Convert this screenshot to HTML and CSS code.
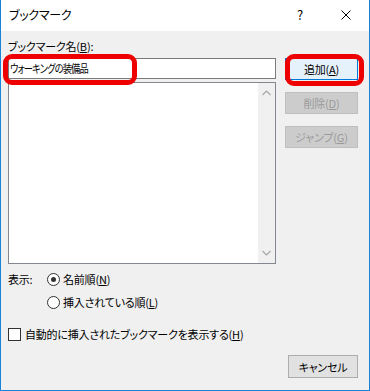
FILE: index.html
```html
<!DOCTYPE html>
<html lang="ja">
<head>
    <meta charset="UTF-8">
    <meta name="viewport" content="width=device-width, initial-scale=1.0">
    <title>ブックマーク</title>
    <link rel="stylesheet" href="styles.css">
</head>
<body>
    <div class="dialog">
        <div class="titlebar">
            <span class="title">ブックマーク</span>
            <div class="caption-buttons">
                <span class="cap-btn">?</span>
                <span class="cap-btn">
                    <svg width="10" height="10" viewBox="0 0 10 10"><path d="M0.5 0.5L9.5 9.5M9.5 0.5L0.5 9.5" stroke="#000" stroke-width="1"/></svg>
                </span>
            </div>
        </div>

        <div class="body">
            <div class="main">
                <div class="left">
                    <div class="label">ブックマーク名(<u>B</u>):</div>
                    <div class="textbox"><span class="value">ウォーキングの装備品</span></div>
                    <div class="listbox">
                        <div class="list-area"></div>
                        <div class="scrollbar">
                            <svg width="9" height="6" viewBox="0 0 9 6"><path d="M0.5 5L4.5 1L8.5 5" fill="none" stroke="#a6a6a6" stroke-width="1.2"/></svg>
                            <svg width="9" height="6" viewBox="0 0 9 6"><path d="M0.5 1L4.5 5L8.5 1" fill="none" stroke="#a6a6a6" stroke-width="1.2"/></svg>
                        </div>
                    </div>
                </div>
                <div class="buttons">
                    <button class="btn default">追加(<u>A</u>)</button>
                    <button class="btn" disabled>削除(<u>D</u>)</button>
                    <button class="btn" disabled>ジャンプ(<u>G</u>)</button>
                </div>
            </div>

            <div class="display-group">
                <div class="display-label">表示:</div>
                <div class="radios">
                    <div class="option"><span class="radio checked"></span>名前順(<u>N</u>)</div>
                    <div class="option"><span class="radio"></span>挿入されている順(<u>L</u>)</div>
                </div>
            </div>

            <div class="option check-row"><span class="checkbox"></span>自動的に挿入されたブックマークを表示する(<u>H</u>)</div>

            <div class="footer">
                <button class="btn cancel">キャンセル</button>
            </div>
        </div>

        <div class="highlight hl-name"></div>
        <div class="highlight hl-add"></div>
    </div>
</body>
</html>
```

FILE: styles.css
```css
/* dialog */
body {
    margin: 0;
    padding: 0;
    font-family: "Noto Sans CJK JP", "Noto Sans", sans-serif;
    font-size: 11px;
    letter-spacing: -0.2px;
    font-feature-settings: "palt";
    color: #000;
}
.dialog {
    position: relative;
    width: 370px;
    height: 391px;
    box-sizing: border-box;
    border: 1px solid #1883d7;
    border-top: none;
    background-color: #f0f0f0;
    display: flex;
    flex-direction: column;
}
.titlebar {
    height: 31px;
    background-color: #fff;
    display: flex;
    align-items: center;
    justify-content: space-between;
    padding-left: 8px;
}
.title {
    font-size: 12px;
    letter-spacing: -0.3px;
    line-height: 16px;
    margin-top: -2px;
}
.caption-buttons {
    display: flex;
    height: 100%;
}
.cap-btn {
    width: 46px;
    display: flex;
    align-items: center;
    justify-content: center;
    font-size: 13px;
    margin-top: -2px;
}
.body {
    padding: 7px 11px 0 7px;
    display: flex;
    flex-direction: column;
}
.main {
    display: flex;
}
.left {
    width: 271px;
    display: flex;
    flex-direction: column;
}
.label {
    line-height: 16px;
    height: 16px;
    margin-bottom: 4px;
}
.textbox {
    height: 21px;
    box-sizing: border-box;
    border: 1px solid #7a7a7a;
    background-color: #fff;
    padding-left: 1px;
    line-height: 19px;
    font-size: 11.5px;
    letter-spacing: -1px;
}
.textbox .value {
    display: inline-block;
    transform: scaleX(0.8);
    transform-origin: left center;
    white-space: nowrap;
}
.listbox {
    margin-top: 3px;
    height: 182px;
    box-sizing: border-box;
    border: 1px solid #828790;
    background-color: #fff;
    display: flex;
}
.list-area {
    flex: 1;
}
.scrollbar {
    width: 17px;
    background-color: #f0f0f0;
    display: flex;
    flex-direction: column;
    justify-content: space-between;
    align-items: center;
    padding: 7px 0;
}
.buttons {
    margin-left: 9px;
    margin-top: 20px;
    display: flex;
    flex-direction: column;
    gap: 12px;
}
.btn {
    width: 73px;
    height: 22px;
    box-sizing: border-box;
    padding: 0;
    font-family: inherit;
    font-size: 11px;
    letter-spacing: -0.2px;
    font-feature-settings: "palt";
    line-height: 18px;
    background-color: #e1e1e1;
    border: 1px solid #adadad;
    color: #000;
}
.btn.default {
    background-color: #e5f1fb;
    border-color: #0078d7;
}
.btn:disabled {
    background-color: #cccccc;
    border-color: #bfbfbf;
    color: #9a9a9a;
}
.display-group {
    display: flex;
    margin-top: 7px;
}
.display-label {
    width: 39px;
    line-height: 16px;
}
.radios {
    display: flex;
    flex-direction: column;
    gap: 7px;
}
.option {
    display: flex;
    align-items: center;
    height: 16px;
    line-height: 16px;
}
.radio {
    position: relative;
    width: 13px;
    height: 13px;
    box-sizing: border-box;
    border: 1px solid #333;
    border-radius: 50%;
    background-color: #fff;
    margin-right: 3px;
}
.radio.checked::after {
    content: "";
    position: absolute;
    left: 3px;
    top: 3px;
    width: 5px;
    height: 5px;
    border-radius: 50%;
    background-color: #333;
}
.check-row {
    margin-top: 16px;
}
.checkbox {
    width: 13px;
    height: 13px;
    box-sizing: border-box;
    border: 1px solid #333;
    background-color: #fff;
    margin-right: 4px;
}
.footer {
    display: flex;
    justify-content: flex-end;
    margin-top: 13px;
}
.btn.cancel {
    width: 70px;
    height: 23px;
}
.highlight {
    position: absolute;
    box-sizing: border-box;
    border: 5px solid #ee0000;
    border-radius: 9px;
}
.hl-name {
    left: 2px;
    top: 54px;
    width: 134px;
    height: 31px;
}
.hl-add {
    left: 284px;
    top: 54px;
    width: 79px;
    height: 32px;
}
```
